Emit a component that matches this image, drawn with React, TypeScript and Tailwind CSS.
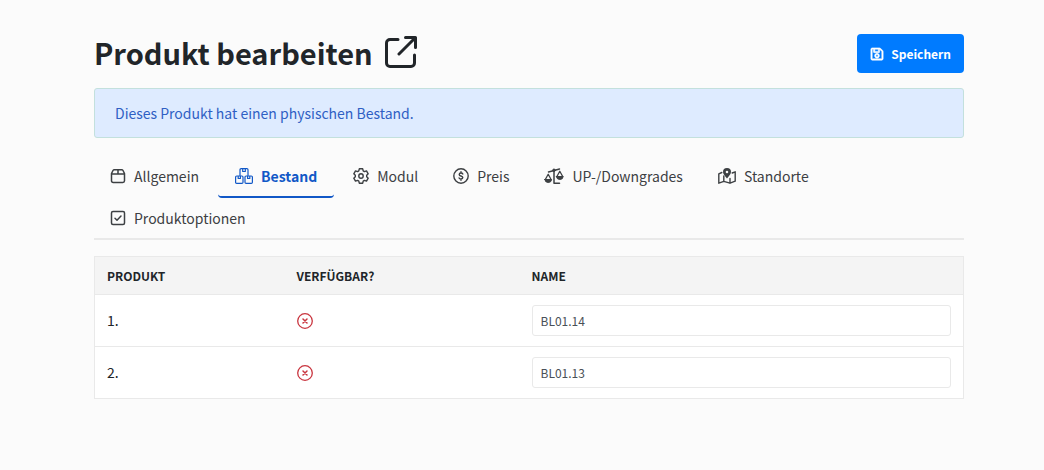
import type { ReactNode } from "react";
import { FaRegSave } from "react-icons/fa";

const stroke = {
  fill: "none",
  stroke: "currentColor",
  strokeWidth: 1.5,
  strokeLinecap: "round" as const,
  strokeLinejoin: "round" as const,
};

function ExternalIcon() {
  return (
    <svg viewBox="0 0 32 32" className="size-8" {...stroke} strokeWidth={3}>
      <path d="M13 3.500H5a3.500 3.500 0 0 0-3.500 3.500v20a3.500 3.500 0 0 0 3.500 3.500h21a3.500 3.500 0 0 0 3.500-3.500v-8M20.500 1.500h10v10M30 2 14 18" />
    </svg>
  );
}

function BoxIcon() {
  return (
    <svg viewBox="0 0 16 16" className="h-4 w-4" {...stroke}>
      <path d="M1.500 5.500 3 2.500Q3.400 1.700 4.300 1.700h7.400q.9 0 1.300.8l1.500 3v7.300q0 1.700-1.700 1.700H3.200q-1.700 0-1.700-1.700ZM1.500 6h13M8 1.700V6" />
    </svg>
  );
}

function BoxesIcon() {
  return (
    <svg viewBox="0 0 18 16" className="h-4 w-[18px]" {...stroke} strokeWidth={1.2}>
      <path d="M5 7.400V1.800Q5 .7 6.100.7h5.800q1.100 0 1.100 1.100v5.600M7.700.8v2.700h2.600V.8" />
      <path d="M1.700 8h5.200Q8 8 8 9.100v5.100q0 1.100-1.100 1.100H1.700q-1.100 0-1.100-1.100V9.100Q.6 8 1.700 8ZM3.200 8v2.500h2.200V8" />
      <path d="M11.100 8h5.200q1.100 0 1.100 1.100v5.100q0 1.100-1.100 1.100h-5.200q-1.100 0-1.100-1.100V9.100Q10 8 11.100 8ZM12.600 8v2.500h2.200V8" />
    </svg>
  );
}

function CogIcon() {
  return (
    <svg viewBox="0 0 16 16" className="h-4 w-4" {...stroke} strokeWidth={1.4}>
      <path d="M6.300.8h3.400l.5 2.100 1.200.7 2.100-.7 1.700 2.900L13.700 7.300v1.400l1.500 1.500-1.700 2.900-2.100-.7-1.200.7-.5 2.100H6.300l-.5-2.100-1.200-.7-2.100.7-1.700-2.900 1.500-1.500V7.300L.8 5.800l1.700-2.900 2.100.7 1.200-.7Z" />
      <circle cx="8" cy="8" r="2.200" />
    </svg>
  );
}

function DollarIcon() {
  return (
    <svg viewBox="0 0 16 16" className="h-4 w-4" {...stroke}>
      <circle cx="8" cy="8" r="7.200" strokeWidth="1.400" />
      <path
        d="M9.800 6Q9.400 5 8 5 6.200 5 6.200 6.400q0 1.100 1.800 1.600t1.800 1.600Q9.800 11 8 11q-1.500 0-1.900-1M8 3.700V5m0 6v1.300"
        strokeWidth="1.400"
      />
    </svg>
  );
}

function ScaleIcon() {
  return (
    <svg viewBox="0 0 20 16" className="h-4 w-5" {...stroke}>
      <path d="M4.500 3.900 15.500 1M10 3v12.200h5.500" />
      <circle cx="10" cy="2.300" r="1.300" fill="currentColor" strokeWidth="1" />
      <path d="M1.300 11.500 4.200 6.200l2.900 5.300M12.900 8.500l2.900-5.300 2.900 5.300" strokeWidth="1.300" />
      <path
        d="M.8 11.500h6.800q-.3 3-3.400 3t-3.400-3ZM12.400 8.500h6.800q-.3 3-3.400 3t-3.400-3Z"
        fill="currentColor"
        strokeWidth="1"
      />
    </svg>
  );
}

function MapIcon() {
  return (
    <svg viewBox="0 0 18 16" className="h-4 w-[18px]" {...stroke} strokeWidth={1.4}>
      <path d="M3.800 4.500.8 5.800v9.400l5-1.900 6.200 1.900 5.200-2V3.800l-3 1.200M5.800 8v5.300M12 10.500v4.700" />
      <path
        d="M9 0a4 4 0 0 0-4 4c0 2.200 2.500 4.600 4 6.500 1.500-1.900 4-4.300 4-6.500a4 4 0 0 0-4-4Zm0 2.700a1.300 1.300 0 1 1 0 2.600 1.300 1.300 0 0 1 0-2.600Z"
        fill="currentColor"
        fillRule="evenodd"
        stroke="none"
      />
    </svg>
  );
}

function CheckIcon() {
  return (
    <svg viewBox="0 0 16 16" className="h-4 w-4" {...stroke}>
      <rect x="1.500" y="1.500" width="13" height="13" rx="1.500" />
      <path d="m5 8.200 2 2 4-4.200" />
    </svg>
  );
}

function UnavailableIcon() {
  return (
    <svg
      viewBox="0 0 16 16"
      className="size-4 text-[#c9353f]"
      role="img"
      aria-label="Nicht verfügbar"
      {...stroke}
    >
      <circle cx="8" cy="8" r="7.300" strokeWidth="1.300" />
      <path d="m6 6 4 4m0-4-4 4" />
    </svg>
  );
}

const tabs: { label: string; icon: ReactNode; active?: boolean }[] = [
  { label: "Allgemein", icon: <BoxIcon /> },
  { label: "Bestand", icon: <BoxesIcon />, active: true },
  { label: "Modul", icon: <CogIcon /> },
  { label: "Preis", icon: <DollarIcon /> },
  { label: "UP-/Downgrades", icon: <ScaleIcon /> },
  { label: "Standorte", icon: <MapIcon /> },
  { label: "Produktoptionen", icon: <CheckIcon /> },
];

const products = ["BL01.14", "BL01.13"];

export default function App() {
  return (
    <div className="min-h-screen bg-[#fbfbfb] pt-[34px] pr-20 pb-10 pl-[94px] font-['Noto_Sans_CJK_SC',sans-serif] text-[#212529]">
      <header className="flex items-start justify-between">
        <div className="flex items-center gap-3">
          <h1 className="text-[29px] leading-9 font-bold">Produkt bearbeiten</h1>
          <a href="#" aria-label="Produkt öffnen">
            <ExternalIcon />
          </a>
        </div>
        <button
          type="button"
          className="flex h-[39px] items-center gap-[7px] rounded bg-[#007bff] px-[13px] text-[12px] font-bold text-white"
        >
          <FaRegSave className="size-[14px] stroke-white stroke-[20px]" />
          Speichern
        </button>
      </header>

      <div className="mt-[15px] rounded-[3px] border border-[#c3e0dd] bg-[#deebff] px-5 py-3 text-[14px] leading-6 text-[#2f5fc4]">
        Dieses Produkt hat einen physischen Bestand.
      </div>

      <nav className="mt-[18px] border-b-2 border-[#e9e9e9] text-[14px]">
        <div className="-mb-0.5 flex flex-wrap gap-x-[3px]">
          {tabs.map((tab) => (
            <a
              key={tab.label}
              href="#"
              className={
                tab.active
                  ? "flex h-[42px] items-center gap-2 rounded-sm border-b-2 border-[#1158c7] px-[17px] font-bold text-[#1158c7]"
                  : "flex h-[42px] items-center gap-2 border-b-2 border-transparent px-4 text-[#3d4043]"
              }
            >
              {tab.icon}
              {tab.label}
            </a>
          ))}
        </div>
      </nav>

      <table className="mt-4 w-full table-fixed border-collapse border border-[#e9e9e9] bg-white text-left">
        <thead className="bg-[#f4f4f4] text-[12px] leading-4">
          <tr className="h-[38px]">
            <th className="w-[190px] px-3">PRODUKT</th>
            <th className="w-[235px] px-3">VERFÜGBAR?</th>
            <th className="px-3">NAME</th>
          </tr>
        </thead>
        <tbody className="text-[14px]">
          {products.map((name, i) => (
            <tr key={name} className="h-[52px] border-t border-[#e9e9e9]">
              <td className="px-3">{i + 1}.</td>
              <td className="px-3">
                <UnavailableIcon />
              </td>
              <td className="px-3">
                <input
                  type="text"
                  aria-label={`Name ${i + 1}`}
                  defaultValue={name}
                  className="block h-[31px] w-full rounded-[3px] border border-[#e9e9e9] bg-white px-2 text-[12px] text-[#495057]"
                />
              </td>
            </tr>
          ))}
        </tbody>
      </table>
    </div>
  );
}
